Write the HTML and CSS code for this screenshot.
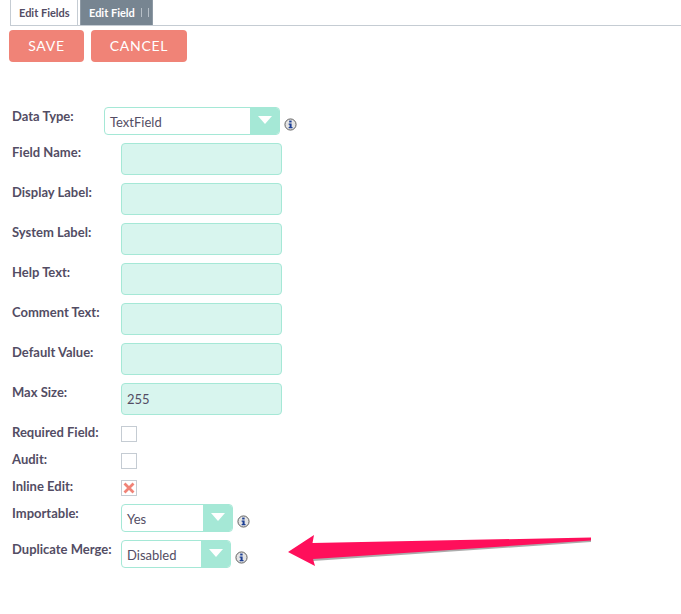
FILE: index.html
```html
<!DOCTYPE html>
<html lang="en">
<head>
<meta charset="utf-8">
<title>Edit Field</title>
<link rel="stylesheet" href="styles.css">
</head>
<body>
<nav class="tabs">
  <a class="tab tab-list">Edit Fields</a>
  <a class="tab tab-active">Edit Field<span class="tab-sep"></span><span class="tab-sep"></span></a>
</nav>
<div class="actions">
  <button class="btn btn-save">SAVE</button>
  <button class="btn btn-cancel">CANCEL</button>
</div>
<form class="form">
  <div class="row row-type">
    <label class="label label-type">Data Type:</label>
    <div class="select select-type"><span class="select-value">TextField</span><span class="select-arrow"><i class="tri"></i></span></div>
    <svg class="info info-type" viewBox="0 0 14 14"><circle cx="7" cy="7" r="6" fill="#e4e4e4" stroke="#555" stroke-width="1"/><rect x="5.6" y="2.8" width="2.6" height="2" fill="#1c3f94"/><path d="M5 6h3.2v3.6H9.2v1.4H5V9.6h1V7.2H5z" fill="#1c3f94"/></svg>
  </div>
  <div class="row row-text"><label class="label">Field Name:</label><input class="input" type="text"></div>
  <div class="row row-text"><label class="label">Display Label:</label><input class="input" type="text"></div>
  <div class="row row-text"><label class="label">System Label:</label><input class="input" type="text"></div>
  <div class="row row-text"><label class="label">Help Text:</label><input class="input" type="text"></div>
  <div class="row row-text"><label class="label">Comment Text:</label><input class="input" type="text"></div>
  <div class="row row-text"><label class="label">Default Value:</label><input class="input" type="text"></div>
  <div class="row row-text"><label class="label">Max Size:</label><input class="input" type="text" value="255"></div>
  <div class="row row-check"><label class="label">Required Field:</label><span class="check"></span></div>
  <div class="row row-check"><label class="label">Audit:</label><span class="check"></span></div>
  <div class="row row-check"><label class="label">Inline Edit:</label><span class="check"><svg class="cross" viewBox="0 0 12 12"><path d="M1.5 1.5l9 9M10.500 1.500l-9 9" stroke="#f08377" stroke-width="2.800" fill="none"/></svg></span></div>
  <div class="row row-import">
    <label class="label">Importable:</label>
    <div class="select select-import"><span class="select-value">Yes</span><span class="select-arrow"><i class="tri"></i></span></div>
    <svg class="info" viewBox="0 0 14 14"><circle cx="7" cy="7" r="6" fill="#e4e4e4" stroke="#555" stroke-width="1"/><rect x="5.6" y="2.8" width="2.6" height="2" fill="#1c3f94"/><path d="M5 6h3.2v3.6H9.2v1.4H5V9.6h1V7.2H5z" fill="#1c3f94"/></svg>
  </div>
  <div class="row row-merge">
    <label class="label">Duplicate Merge:</label>
    <div class="select select-merge"><span class="select-value">Disabled</span><span class="select-arrow"><i class="tri"></i></span></div>
    <svg class="info" viewBox="0 0 14 14"><circle cx="7" cy="7" r="6" fill="#e4e4e4" stroke="#555" stroke-width="1"/><rect x="5.6" y="2.8" width="2.6" height="2" fill="#1c3f94"/><path d="M5 6h3.2v3.6H9.2v1.4H5V9.6h1V7.2H5z" fill="#1c3f94"/></svg>
  </div>
</form>
<svg class="arrow" viewBox="0 0 320 50" width="320" height="50">
  <path d="M33 30 L311 11 L311 8 L33 27 Z" fill="#5a5a5a" opacity=".5" transform="translate(0 1)"/>
  <path d="M8 22 L34 5 L32.500 13 L311 7.500 L311 10.500 L33 29 L35 36 Z" fill="#ff0f5b"/>
</svg>
</body>
</html>
```
FILE: styles.css
```css
* { box-sizing: border-box; }
html, body { margin: 0; padding: 0; }
body {
  position: relative;
  width: 681px;
  height: 614px;
  background: #fff;
  overflow: hidden;
  font-family: Lato, "Open Sans", sans-serif;
  color: #534d64;
}
.tabs {
  display: flex;
  gap: 2px;
  height: 26px;
  margin-left: 10px;
  border-bottom: 1px solid #c5ccd3;
}
.tab {
  display: flex;
  align-items: center;
  height: 25px;
  padding: 0 8px;
  font-size: 11px;
  font-weight: 700;
  white-space: nowrap;
  color: #534d64;
  background: #fff;
  border-left: 1px solid #c5ccd3;
  border-right: 1px solid #c5ccd3;
}
.tab-list { width: 68px; }
.tab-active {
  width: 73px;
  padding: 0 0 0 8px;
  color: #fff;
  background: #778591;
  border-color: #8e9aa5;
}
.tab-sep {
  width: 1px;
  height: 9px;
  margin-left: 6px;
  background: #b6bfc7;
}
.actions {
  display: flex;
  gap: 7px;
  margin: 4px 0 0 9px;
}
.btn {
  height: 32px;
  padding: 0 0 2px;
  border: 0;
  border-radius: 4px;
  background: #f08377;
  color: #fff;
  font-family: inherit;
  font-size: 14px;
  letter-spacing: .7px;
}
.btn-save { width: 75px; }
.btn-cancel { width: 96px; }
.form {
  display: flex;
  flex-direction: column;
  margin: 45px 0 0 12px;
}
.row { display: flex; align-items: flex-start; }
.label {
  font-size: 13px;
  font-weight: 700;
  line-height: 18px;
  color: #534d64;
}
.row-type { height: 36px; }
.row-text { height: 40px; }
.row-text .label { width: 109px; flex: none; }
.row-text .input { height: 32px; }
.row-type .label-type { width: 92px; flex: none; margin-top: 0; }
.input {
  width: 161px;
  padding: 0 5px;
  border: 1px solid #a5e8d6;
  border-radius: 4px;
  background: #d8f5ee;
  color: #534d64;
  font-family: inherit;
  font-size: 13px;
  outline: none;
}
.row-check { height: 27px; }
.row-check .label { width: 109px; flex: none; }
.check {
  display: flex;
  align-items: center;
  justify-content: center;
  width: 16px;
  height: 16px;
  margin-top: 3px;
  border: 1px solid #c5ccd3;
  background: #fff;
}
.cross { width: 12px; height: 12px; }
.select {
  display: flex;
  height: 28px;
  border: 1px solid #a5e8d6;
  border-radius: 4px;
  background: #fff;
  overflow: hidden;
  flex: none;
}
.select-value {
  flex: 1;
  padding-left: 5px;
  font-size: 13px;
  line-height: 29px;
  color: #534d64;
}
.select-arrow {
  display: flex;
  align-items: center;
  justify-content: center;
  width: 29px;
  background: #a5e8d6;
}
.tri {
  width: 0;
  height: 0;
  margin-bottom: 3px;
  border-left: 7px solid transparent;
  border-right: 7px solid transparent;
  border-top: 8px solid #fff;
}
.select-type { width: 176px; }
.select-import { width: 112px; }
.select-merge { width: 110px; }
.row-import { height: 36px; }
.row-merge { height: 36px; }
.row-import .label, .row-merge .label { width: 109px; flex: none; }
.info { width: 13px; height: 13px; flex: none; margin: 11px 0 0 4px; }
.arrow { position: absolute; left: 280px; top: 530px; }
```
